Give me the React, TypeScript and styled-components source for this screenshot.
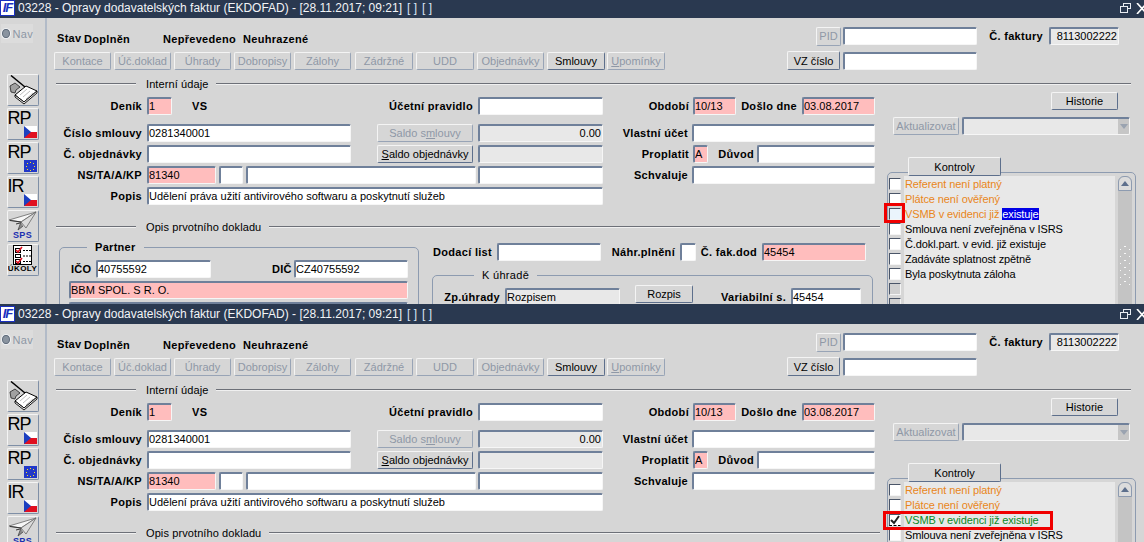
import { FC } from "react";
import styled, { createGlobalStyle } from "styled-components";

const GlobalStyle = createGlobalStyle`
  html, body {
    margin: 0;
    padding: 0;
    background: #d6d6d6;
    overflow: hidden;
  }
  body {
    font-family: "Liberation Sans", Arial, sans-serif;
    font-size: 11px;
    color: #000;
  }
`;

const CzFlag = () => (
  <svg width="13" height="12" viewBox="0 0 13 12">
    <rect width="13" height="6" fill="#fff" />
    <rect y="6" width="13" height="6" fill="#e01020" />
    <path d="M0 0L7 6L0 12Z" fill="#1c3fc0" />
  </svg>
);

const EuFlag = () => (
  <svg width="13" height="12" viewBox="0 0 13 12">
    <rect width="13" height="12" fill="#2238c8" />
    {[[6, 2], [9, 3], [10, 6], [9, 9], [6, 10], [3, 9], [2, 6], [3, 3]].map(([x, y]) => (
      <rect key={`${x}-${y}`} x={x} y={y} width="1" height="1" fill="#f6e020" />
    ))}
  </svg>
);

const NotebookIcon = () => (
  <svg width="30" height="30" viewBox="0 0 30 30">
    <path d="M7 20L18 11L29 16L16 27Z" fill="#fff" stroke="#000" strokeWidth="1" />
    <path d="M7 20L7 22L16 29L29 18V16L16 27Z" fill="#f4f4f4" stroke="#000" strokeWidth="0.9" />
    <path d="M12 20L19 14M15 22L22 16M18 24L25 18" stroke="#aaa" strokeWidth="0.8" />
    <path d="M3 0.5L17 12" stroke="#000" strokeWidth="1.5" />
    <path d="M2 11L7 8L12 12L8 15L7 18L3 17Z" fill="#a0a0a0" stroke="#222" strokeWidth="0.8" />
  </svg>
);

const PlaneIcon = () => (
  <svg width="29" height="20" viewBox="0 0 29 20">
    <path d="M1 9L28 1L13 11Z" fill="#f6f6f6" stroke="#666" strokeWidth="0.8" />
    <path d="M28 1L13 11L18 17Z" fill="#dcdcdc" stroke="#666" strokeWidth="0.8" />
    <path d="M13 11L10 19L15 15" fill="#8c8c8c" stroke="#444" strokeWidth="0.8" />
    <path d="M2 9.5L13 11M8 13L12 12" stroke="#333" strokeWidth="1" />
  </svg>
);

const TasksIcon = () => (
  <svg width="19" height="20" viewBox="0 0 19 20">
    <rect x="0.5" y="0.5" width="18" height="19" fill="#fff" stroke="#000" />
    <rect x="2.5" y="3.5" width="5" height="4" fill="#fff" stroke="#000" />
    <rect x="2.5" y="9.5" width="5" height="3" fill="#fff" stroke="#000" />
    <rect x="2.5" y="14.5" width="5" height="4" fill="#fff" stroke="#000" />
    <path d="M3 5L5 7L9 2M3 16L5 18L9 13" fill="none" stroke="#e01020" strokeWidth="1.6" />
    <path d="M10 5.5H18M10 11H18M10 16.5H18" stroke="#000" strokeDasharray="2 1" />
  </svg>
);

const Window = styled.section<{ $height: number; $top?: number }>`
  height: ${(p) => p.$height}px;
  margin-top: ${(p) => p.$top ?? 0}px;
  overflow: hidden;
  background: #d6d6d6;
`;

const TitleBar = styled.header`
  height: 20px;
  display: flex;
  align-items: center;
  background: #2a3950;
  color: #f2f4f7;
  font-size: 12px;
  white-space: nowrap;
`;

const TitleLogo = styled.span`
  width: 15px;
  height: 16px;
  margin-right: 3px;
  background: #fff;
  border: 1px solid #1a2fc0;
  box-sizing: border-box;
  color: #1a2fc0;
  font: italic bold 13px/14px "Liberation Sans", sans-serif;
  text-align: center;
  letter-spacing: -1px;
`;

const TitleMark = styled.span`
  margin-left: 5px;
  color: #d8e4f4;
`;

const WindowControls = styled.span`
  display: flex;
  align-items: center;
  gap: 5px;
  margin-left: auto;
  margin-right: -4px;
`;

const Body = styled.div`
  display: flex;
`;

const Sidebar = styled.aside`
  width: 45px;
  height: 540px;
  flex: none;
  border-right: 2px solid #b2bbc8;
  display: flex;
  flex-direction: column;
  align-items: center;
  padding-top: 6px;
`;

const NavBox = styled.div`
  align-self: flex-start;
  width: 32px;
  height: 19px;
  margin-left: 1px;
  background: #dcdcdc;
  color: #8d97a5;
  display: flex;
  align-items: center;
  gap: 3px;
  font-size: 11px;
  letter-spacing: 0.3px;
`;

const NavDot = styled.span`
  box-sizing: border-box;
  width: 9px;
  height: 9px;
  margin-left: 1px;
  border-radius: 50%;
  background: #8a94a0;
  border: 1px solid #5f6b7a;
  box-shadow: 0 0 0 1px #eef0f3;
`;

const ToolList = styled.div`
  margin-top: 31px;
  display: flex;
  flex-direction: column;
  gap: 2px;
`;

const ToolButton = styled.button`
  position: relative;
  width: 32px;
  height: 32px;
  padding: 0;
  background: #d6d6d6;
  border: 1px solid #7f8fa6;
  border-top-color: #f4f4f4;
  border-left-color: #f4f4f4;
  border-radius: 2px;
  overflow: hidden;
  display: flex;
  flex-direction: column;
  align-items: center;
  justify-content: flex-start;
  font-family: inherit;
`;

const ToolLetters = styled.span`
  align-self: flex-start;
  margin-left: 0;
  font-size: 18px;
  line-height: 18px;
  letter-spacing: -1px;
  color: #000;
`;

const ToolFlag = styled.span`
  position: absolute;
  right: 1px;
  bottom: 1px;
  line-height: 0;
`;

const ToolCaption = styled.span<{ $color: string; $size: number }>`
  font-size: ${(p) => p.$size}px;
  line-height: 8px;
  font-weight: bold;
  color: ${(p) => p.$color};
  letter-spacing: 0.4px;
`;

const Main = styled.main`
  flex: 1;
  min-width: 0;
`;

const Row = styled.div<{ $top?: number; $left?: number; $height?: number }>`
  display: flex;
  align-items: center;
  height: ${(p) => p.$height ?? 18}px;
  margin-top: ${(p) => p.$top ?? 0}px;
  padding-left: ${(p) => p.$left ?? 0}px;
  white-space: nowrap;
`;

const Label = styled.span<{ $w?: number; $left?: boolean; $mr?: number; $ml?: number; $drop?: number }>`
  flex: none;
  width: ${(p) => (p.$w ? `${p.$w}px` : "auto")};
  margin-right: ${(p) => p.$mr ?? 0}px;
  margin-left: ${(p) => p.$ml ?? 0}px;
  margin-top: ${(p) => p.$drop ?? 0}px;
  text-align: ${(p) => (p.$left ? "left" : "right")};
  font-weight: bold;
  font-size: 11px;
  letter-spacing: 0.3px;
`;

const Field = styled.span<{
  $w: number;
  $ml?: number;
  $h?: number;
  $tone?: "white" | "pink" | "grey";
  $right?: boolean;
}>`
  flex: none;
  box-sizing: border-box;
  width: ${(p) => p.$w}px;
  height: ${(p) => p.$h ?? 18}px;
  margin-left: ${(p) => p.$ml ?? 0}px;
  padding: 0 1px 0 0;
  background: ${(p) =>
    p.$tone === "pink" ? "#ffbdbd" : p.$tone === "grey" ? "#e8e8e8" : "#fff"};
  border: 1px solid #f6f6f6;
  border-top: 2px solid #6f809a;
  border-left: 2px solid #6f809a;
  border-radius: 2px;
  font-size: 11px;
  line-height: 14px;
  text-align: ${(p) => (p.$right ? "right" : "left")};
  overflow: hidden;
`;

const SelectField = styled(Field)`
  display: flex;
  justify-content: flex-end;
  padding: 0;
`;

const SelectArrow = styled.span`
  width: 11px;
  background: #c6c6c6;
  display: flex;
  align-items: center;
  justify-content: center;
`;

const ActionButton = styled.span<{
  $w: number;
  $h?: number;
  $ml?: number;
  $raise?: number;
  $off?: boolean;
}>`
  flex: none;
  box-sizing: border-box;
  width: ${(p) => p.$w}px;
  height: ${(p) => p.$h ?? 18}px;
  margin-left: ${(p) => p.$ml ?? 0}px;
  margin-bottom: ${(p) => p.$raise ?? 0}px;
  display: flex;
  align-items: center;
  justify-content: center;
  background: #d6d6d6;
  color: ${(p) => (p.$off ? "#8f98a6" : "#000")};
  border: 1px solid ${(p) => (p.$off ? "#98a4b6" : "#5d6f8c")};
  border-top: 1px solid #f4f4f4;
  border-left: 1px solid #f4f4f4;
  border-radius: 2px;
  font-size: 11px;
  white-space: pre;
`;

const Underlined = styled.span`
  text-decoration: underline;
`;

const Separator = styled.div<{ $top: number; $start: number; $w?: number }>`
  display: flex;
  align-items: center;
  height: 14px;
  margin-top: ${(p) => p.$top}px;
  padding-left: ${(p) => p.$start}px;
  width: ${(p) => (p.$w ? `${p.$w}px` : "auto")};
  font-size: 11px;
`;

const SeparatorLine = styled.i<{ $w?: number }>`
  display: block;
  height: 1px;
  flex: ${(p) => (p.$w ? "none" : "1")};
  width: ${(p) => (p.$w ? `${p.$w}px` : "auto")};
  background: #6d7078;
  border-bottom: 1px solid #f0f0f0;
`;

const SeparatorText = styled.span`
  margin: 0 8px 0 10px;
  letter-spacing: 0.1px;
`;

const Columns = styled.div`
  display: flex;
  align-items: flex-start;
`;

const FormColumn = styled.div`
  width: 833px;
  flex: none;
`;

const SideColumn = styled.div`
  flex: 1;
  margin-top: 1px;
`;

const ListFrame = styled.div`
  box-sizing: border-box;
  width: 249px;
  height: 170px;
  margin: -4px 0 0 7px;
  padding: 3px 3px 0 1px;
  border: 1px solid #8d9bb0;
  border-radius: 5px;
  display: flex;
`;

const CheckColumn = styled.div`
  width: 15px;
  flex: none;
  display: flex;
  flex-direction: column;
`;

const Check = styled.span<{ $off?: boolean; $hot?: boolean; $focus?: boolean }>`
  box-sizing: border-box;
  width: 12px;
  height: 12px;
  margin: 2px 0 1px;
  background: ${(p) => (p.$off ? "#d0d0d0" : p.$hot ? "#eaf4fc" : "#fff")};
  border: 1px solid #f4f4f4;
  border-top: 1px solid #4a5568;
  border-left: 1px solid #4a5568;
  border-bottom: ${(p) => (p.$focus ? "1px dashed #000" : "1px solid #f4f4f4")};
  line-height: 0;
`;

const CheckLines = styled.div`
  flex: 1;
  background: #e8e8e8;
  padding: 1px 0 0 1px;
`;

const CheckLine = styled.div<{ $color: string }>`
  height: 15px;
  line-height: 15px;
  font-size: 11px;
  letter-spacing: -0.12px;
  color: ${(p) => p.$color};
  white-space: nowrap;
`;

const Selected = styled.span`
  background: #0000e6;
  color: #fff;
`;

const Scrollbar = styled.div`
  position: relative;
  width: 14px;
  flex: none;
  margin-left: 3px;
  background: #c4c4c4;
  border-radius: 6px 6px 0 0;
`;

const ScrollUp = styled.div`
  height: 15px;
  box-sizing: border-box;
  background: #dcdcdc;
  border: 1px solid #8d9bb0;
  border-radius: 6px 6px 0 0;
  display: flex;
  align-items: center;
  justify-content: center;
`;

const Grip = styled.div`
  position: absolute;
  top: 67px;
  left: 2px;
  width: 10px;
  height: 42px;
  background:
    radial-gradient(circle, #f8f8f8 0 1px, transparent 1px) 0 0 / 10px 7px,
    radial-gradient(circle, #f8f8f8 0 1px, transparent 1px) 5px 3px / 10px 7px;
`;

const Legend = styled.span<{ $x: number }>`
  position: absolute;
  top: -8px;
  left: ${(p) => p.$x}px;
  padding: 0 8px;
  background: #d6d6d6;
  font-size: 11px;
  line-height: 14px;
  letter-spacing: 0.3px;
`;

const Group = styled.div<{ $w: number; $h: number; $top: number; $ml: number }>`
  position: relative;
  box-sizing: border-box;
  width: ${(p) => p.$w}px;
  height: ${(p) => p.$h}px;
  margin-top: ${(p) => p.$top}px;
  margin-left: ${(p) => p.$ml}px;
  border: 1px solid #8d9bb0;
  border-radius: 5px;
`;

const LowerArea = styled.div`
  display: flex;
  align-items: flex-start;
`;

const LowerRight = styled.div`
  margin-left: 13px;
`;

const Highlight = styled.div<{ $x: number; $y: number; $w: number; $h: number }>`
  position: absolute;
  left: ${(p) => p.$x}px;
  top: ${(p) => p.$y}px;
  width: ${(p) => p.$w}px;
  height: ${(p) => p.$h}px;
  box-sizing: border-box;
  border: 3px solid #f00000;
`;

const Canvas = styled.div`
  position: relative;
  width: 1144px;
  height: 542px;
  overflow: hidden;
`;

const toolbar = [
  ["Kontace", 57, 54],
  ["Úč.doklad", 57, 3],
  ["Úhrady", 57, 3],
  ["Dobropisy", 57, 3],
  ["Zálohy", 57, 3],
  ["Zádržné", 58, 4],
  ["UDD", 58, 3],
  ["Objednávky", 67, 3],
] as const;

const checks = [
  ["Referent není platný", "#e8861a"],
  ["Plátce není ověřený", "#e8861a"],
  ["VSMB v evidenci již existuje", "#e8861a"],
  ["Smlouva není zveřejněna v ISRS", "#000"],
  ["Č.dokl.part. v evid. již existuje", "#000"],
  ["Zadáváte splatnost zpětně", "#000"],
  ["Byla poskytnuta záloha", "#000"],
] as const;

const TaskWindow: FC<{ height: number; top?: number; checked?: boolean }> = ({
  height,
  top,
  checked,
}) => (
  <Window $height={height} $top={top}>
    <TitleBar>
      <TitleLogo>IF</TitleLogo>
      03228 - Opravy dodavatelských faktur (EKDOFAD) - [28.11.2017; 09:21]
      <TitleMark>[ ]</TitleMark>
      <TitleMark>[ ]</TitleMark>
      <WindowControls>
        <svg width="11" height="10" viewBox="0 0 11 10" fill="none" stroke="#e8ecf2">
          <rect x="3.5" y="0.5" width="7" height="5" />
          <rect x="0.5" y="3.5" width="7" height="6" fill="#2a3950" />
        </svg>
        <svg width="12" height="11" viewBox="0 0 12 11" stroke="#fff" strokeWidth="1.6">
          <path d="M1 0L11 11M11 0L1 11" />
        </svg>
      </WindowControls>
    </TitleBar>
    <Body>
      <Sidebar>
        <NavBox>
          <NavDot />
          Nav
        </NavBox>
        <ToolList>
          <ToolButton>
            <NotebookIcon />
          </ToolButton>
          <ToolButton>
            <ToolLetters>RP</ToolLetters>
            <ToolFlag><CzFlag /></ToolFlag>
          </ToolButton>
          <ToolButton>
            <ToolLetters>RP</ToolLetters>
            <ToolFlag><EuFlag /></ToolFlag>
          </ToolButton>
          <ToolButton>
            <ToolLetters>IR</ToolLetters>
            <ToolFlag><CzFlag /></ToolFlag>
          </ToolButton>
          <ToolButton>
            <PlaneIcon />
            <ToolCaption $color="#1a2fb0" $size={9}>SPS</ToolCaption>
          </ToolButton>
          <ToolButton>
            <TasksIcon />
            <ToolCaption $color="#000" $size={8}>ÚKOLY</ToolCaption>
          </ToolButton>
        </ToolList>
      </Sidebar>
      <Main>
        <Row $top={9}>
          <Label $left $ml={10} $w={27} $drop={3}>Stav</Label>
          <Label $left $w={79} $drop={6}>Doplněn</Label>
          <Label $left $w={80} $drop={6}>Nepřevedeno</Label>
          <Label $left $w={80} $drop={6}>Neuhrazené</Label>
          <ActionButton $w={25} $off $ml={493} $h={19}>PID</ActionButton>
          <Field $w={134} $ml={2} />
          <Label $w={66} $mr={6}>Č. faktury</Label>
          <Field $w={70} $tone="grey" $right>8113002222</Field>
        </Row>
        <Row $top={6} $height={19}>
          {toolbar.map(([name, w, gap], i) => (
            <ActionButton key={name} $w={w} $ml={i === 0 ? 7 : gap} $off>{name}</ActionButton>
          ))}
          <ActionButton $w={58} $ml={3}>Smlouvy</ActionButton>
          <ActionButton $w={58} $ml={2} $off><Underlined>U</Underlined>pomínky</ActionButton>
          <ActionButton $w={53} $ml={122} $h={19}>VZ číslo</ActionButton>
          <Field $w={134} $ml={3} />
        </Row>
        <Separator $top={7} $start={9} $w={1075}>
          <SeparatorLine $w={80} />
          <SeparatorText>Interní údaje</SeparatorText>
          <SeparatorLine />
        </Separator>
        <Columns>
          <FormColumn>
            <Row $top={6}>
              <Label $w={95} $mr={5}>Deník</Label>
              <Field $w={25} $tone="pink">1</Field>
              <Label $left $ml={20} $w={20}>VS</Label>
              <Label $w={261} $mr={5}>Účetní pravidlo</Label>
              <Field $w={125} />
              <Label $w={86} $mr={4}>Období</Label>
              <Field $w={43} $tone="pink">10/13</Field>
              <Label $w={61} $mr={5}>Došlo dne</Label>
              <Field $w={73} $tone="pink">03.08.2017</Field>
            </Row>
            <Row $top={9}>
              <Label $w={95} $mr={5}>Číslo smlouvy</Label>
              <Field $w={204}>0281340001</Field>
              <ActionButton $w={96} $ml={26} $off>Saldo s<Underlined>m</Underlined>louvy</ActionButton>
              <Field $w={125} $ml={5} $tone="grey" $right>0.00</Field>
              <Label $w={85} $mr={4}>Vlastní účet</Label>
              <Field $w={183} />
            </Row>
            <Row $top={3}>
              <Label $w={95} $mr={5}>Č. objednávky</Label>
              <Field $w={204} />
              <ActionButton $w={96} $ml={26}><Underlined>S</Underlined>aldo objednávky</ActionButton>
              <Field $w={125} $ml={5} $tone="grey" />
              <Label $w={86} $mr={4}>Proplatit</Label>
              <Field $w={15} $tone="pink">A</Field>
              <Label $w={46} $mr={3}>Důvod</Label>
              <Field $w={118} />
            </Row>
            <Row $top={3}>
              <Label $w={95} $mr={5}>NS/TA/A/KP</Label>
              <Field $w={69} $tone="pink">81340</Field>
              <Field $w={24} $ml={3} />
              <Field $w={230} $ml={3} />
              <Field $w={125} $ml={2} />
              <Label $w={85} $mr={4}>Schvaluje</Label>
              <Field $w={183} />
            </Row>
            <Row $top={3}>
              <Label $w={95} $mr={5}>Popis</Label>
              <Field $w={456}>Udělení práva užití antivirového softwaru a poskytnutí služeb</Field>
            </Row>
            <Separator $top={15} $start={9}>
              <SeparatorLine $w={80} />
              <SeparatorText>Opis prvotního dokladu</SeparatorText>
              <SeparatorLine />
            </Separator>
            <LowerArea>
              <Group $w={360} $h={120} $top={13} $ml={12}>
                <Legend $x={27}><Label $left>Partner</Label></Legend>
                <Row $top={12} $left={11}>
                  <Label $left $w={25}>IČO</Label>
                  <Field $w={115}>40755592</Field>
                  <Label $left $ml={61} $w={22}>DIČ</Label>
                  <Field $w={114}>CZ40755592</Field>
                </Row>
                <Row $top={3} $left={9}>
                  <Field $w={339} $tone="pink">BBM SPOL. S R. O.</Field>
                </Row>
                <Row $top={3} $left={9}>
                  <Field $w={339} $tone="grey" />
                </Row>
              </Group>
              <LowerRight>
                <Row $top={9}>
                  <Label $w={60} $mr={5}>Dodací list</Label>
                  <Field $w={104} />
                  <Label $w={74} $mr={5}>Náhr.plnění</Label>
                  <Field $w={16} />
                  <Label $w={61} $mr={5}>Č. fak.dod</Label>
                  <Field $w={104} $tone="pink">45454</Field>
                </Row>
                <Group $w={441} $h={80} $top={14} $ml={0}>
                  <Legend $x={41}>K úhradě</Legend>
                  <Row $top={12}>
                    <Label $w={67} $mr={5}>Zp.úhrady</Label>
                    <Field $w={115} $tone="grey">Rozpisem</Field>
                    <ActionButton $w={58} $ml={15} $raise={6}>Rozpis</ActionButton>
                    <Label $w={93} $mr={5}>Variabilní s.</Label>
                    <Field $w={70}>45454</Field>
                  </Row>
                </Group>
              </LowerRight>
            </LowerArea>
          </FormColumn>
          <SideColumn>
            <Row $left={171}>
              <ActionButton $w={67}>Historie</ActionButton>
            </Row>
            <Row $top={7} $left={13}>
              <ActionButton $w={66} $off>Aktualizovat</ActionButton>
              <SelectField $w={168} $ml={3} $tone="grey">
                <SelectArrow>
                  <svg width="8" height="5" viewBox="0 0 8 5">
                    <path d="M0 0H8L4 5Z" fill="#9aa3b0" />
                  </svg>
                </SelectArrow>
              </SelectField>
            </Row>
            <Row $top={22} $left={28} $height={19}>
              <ActionButton $w={93} $h={19}>Kontroly</ActionButton>
            </Row>
            <ListFrame>
              <CheckColumn>
                {checks.map(([name], i) => (
                  <Check key={name} $hot={i === 2 && !checked} $focus={i === 2 && checked}>
                    {checked && i === 2 && (
                      <svg width="10" height="10" viewBox="0 0 10 10" fill="none" stroke="#222" strokeWidth="2">
                        <path d="M1 5L4 8L9 1" />
                      </svg>
                    )}
                  </Check>
                ))}
                <Check $off />
                <Check $off />
              </CheckColumn>
              <CheckLines>
                {checks.map(([name, color], i) => (
                  <CheckLine key={name} $color={i === 2 && checked ? "#0a8a1e" : color}>
                    {i === 2 && !checked ? (
                      <>VSMB v evidenci již <Selected>existuje</Selected></>
                    ) : (
                      name
                    )}
                  </CheckLine>
                ))}
              </CheckLines>
              <Scrollbar>
                <ScrollUp>
                  <svg width="8" height="5" viewBox="0 0 8 5">
                    <path d="M4 0L8 5H0Z" fill="#5d6f8c" />
                  </svg>
                </ScrollUp>
                <Grip />
              </Scrollbar>
            </ListFrame>
          </SideColumn>
        </Columns>
      </Main>
    </Body>
  </Window>
);

export default function App() {
  return (
    <>
      <GlobalStyle />
      <Canvas>
        <TaskWindow height={306} top={-2} />
        <TaskWindow height={238} checked />
        <Highlight $x={884} $y={203} $w={21} $h={20} />
        <Highlight $x={883} $y={511} $w={170} $h={19} />
      </Canvas>
    </>
  );
}
